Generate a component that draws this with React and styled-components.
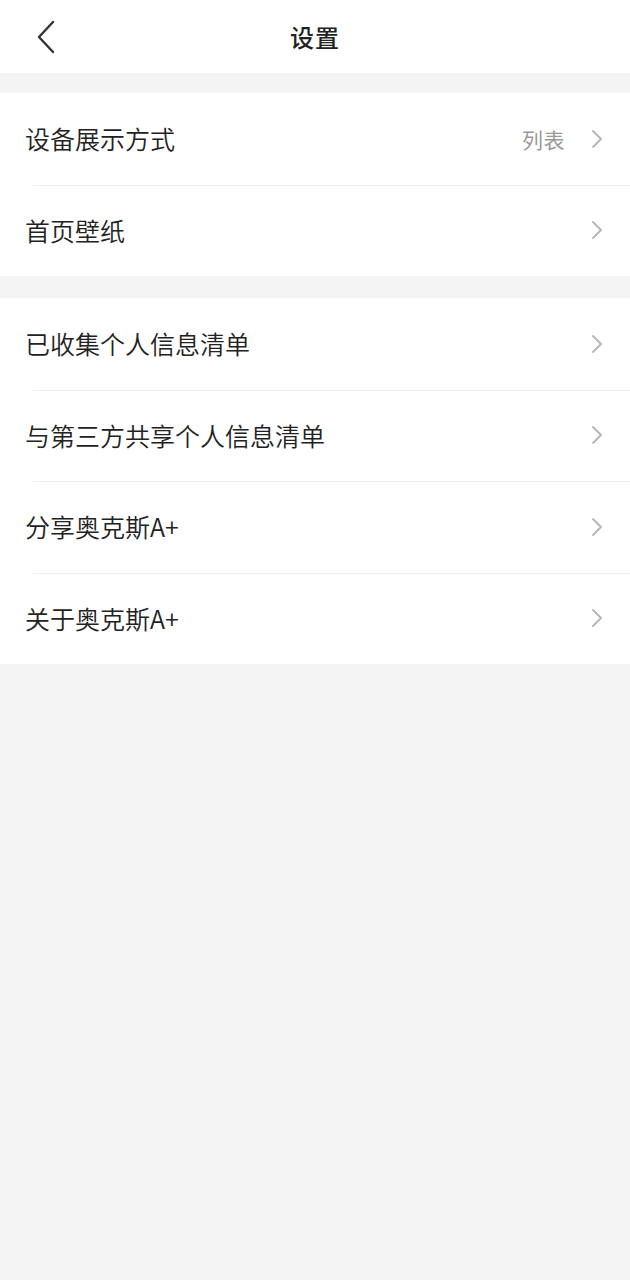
import styled, { createGlobalStyle } from 'styled-components';

const GlobalStyle = createGlobalStyle`
  html, body {
    margin: 0;
    padding: 0;
    background: #f4f4f4;
  }
  body {
    font-family: "Noto Sans CJK SC", "Noto Sans", sans-serif;
    -webkit-font-smoothing: antialiased;
  }
`;

const Page = styled.div`
  min-height: 1280px;
  background: #f4f4f4;
`;

const Header = styled.header`
  height: 73px;
  background: #fff;
  display: flex;
  align-items: center;
  justify-content: center;
  position: relative;
`;

const BackButton = styled.button`
  position: absolute;
  left: 30px;
  top: 18px;
  width: 32px;
  height: 38px;
  padding: 0;
  border: 0;
  background: none;
  display: flex;
  align-items: center;
  justify-content: center;
`;

const Title = styled.h1`
  margin: 0;
  font-size: 24px;
  font-weight: 500;
  color: #222;
  letter-spacing: 1px;
`;

const Group = styled.section`
  background: #fff;
  margin-top: ${p => p.$gap}px;
`;

const Row = styled.div`
  height: 91.5px;
  box-sizing: border-box;
  display: flex;
  align-items: center;
  padding: 0 26px 0 25px;
  position: relative;

  & + &::before {
    content: '';
    position: absolute;
    top: 0;
    left: 33px;
    right: 0;
    height: 1px;
    background: #efefef;
  }
`;

const Label = styled.span`
  flex: 1;
  font-size: 25px;
  font-weight: 350;
  color: #222;
  line-height: 1;
`;

const Value = styled.span`
  font-size: 21px;
  color: #999;
  margin-right: 25px;
  letter-spacing: 0.5px;
`;

function Chevron() {
  return (
    <svg width="14" height="22" viewBox="0 0 14 22" fill="none">
      <path d="M3 3l8 8-8 8" stroke="#b4b4b4" strokeWidth="1.8" strokeLinecap="round" strokeLinejoin="round" />
    </svg>
  );
}

function BackIcon() {
  return (
    <svg width="22" height="34" viewBox="0 0 22 34" fill="none">
      <path d="M18 2L4 17l14 15" stroke="#333" strokeWidth="2.4" strokeLinecap="round" strokeLinejoin="round" />
    </svg>
  );
}

const groups = [
  {
    gap: 20,
    items: [
      { label: '设备展示方式', value: '列表' },
      { label: '首页壁纸' },
    ],
  },
  {
    gap: 22,
    items: [
      { label: '已收集个人信息清单' },
      { label: '与第三方共享个人信息清单' },
      { label: '分享奥克斯A+' },
      { label: '关于奥克斯A+' },
    ],
  },
];

export default function App() {
  return (
    <Page>
      <GlobalStyle />
      <Header>
        <BackButton aria-label="返回">
          <BackIcon />
        </BackButton>
        <Title>设置</Title>
      </Header>
      {groups.map((g, i) => (
        <Group key={i} $gap={g.gap}>
          {g.items.map(item => (
            <Row key={item.label}>
              <Label>{item.label}</Label>
              {item.value && <Value>{item.value}</Value>}
              <Chevron />
            </Row>
          ))}
        </Group>
      ))}
    </Page>
  );
}
